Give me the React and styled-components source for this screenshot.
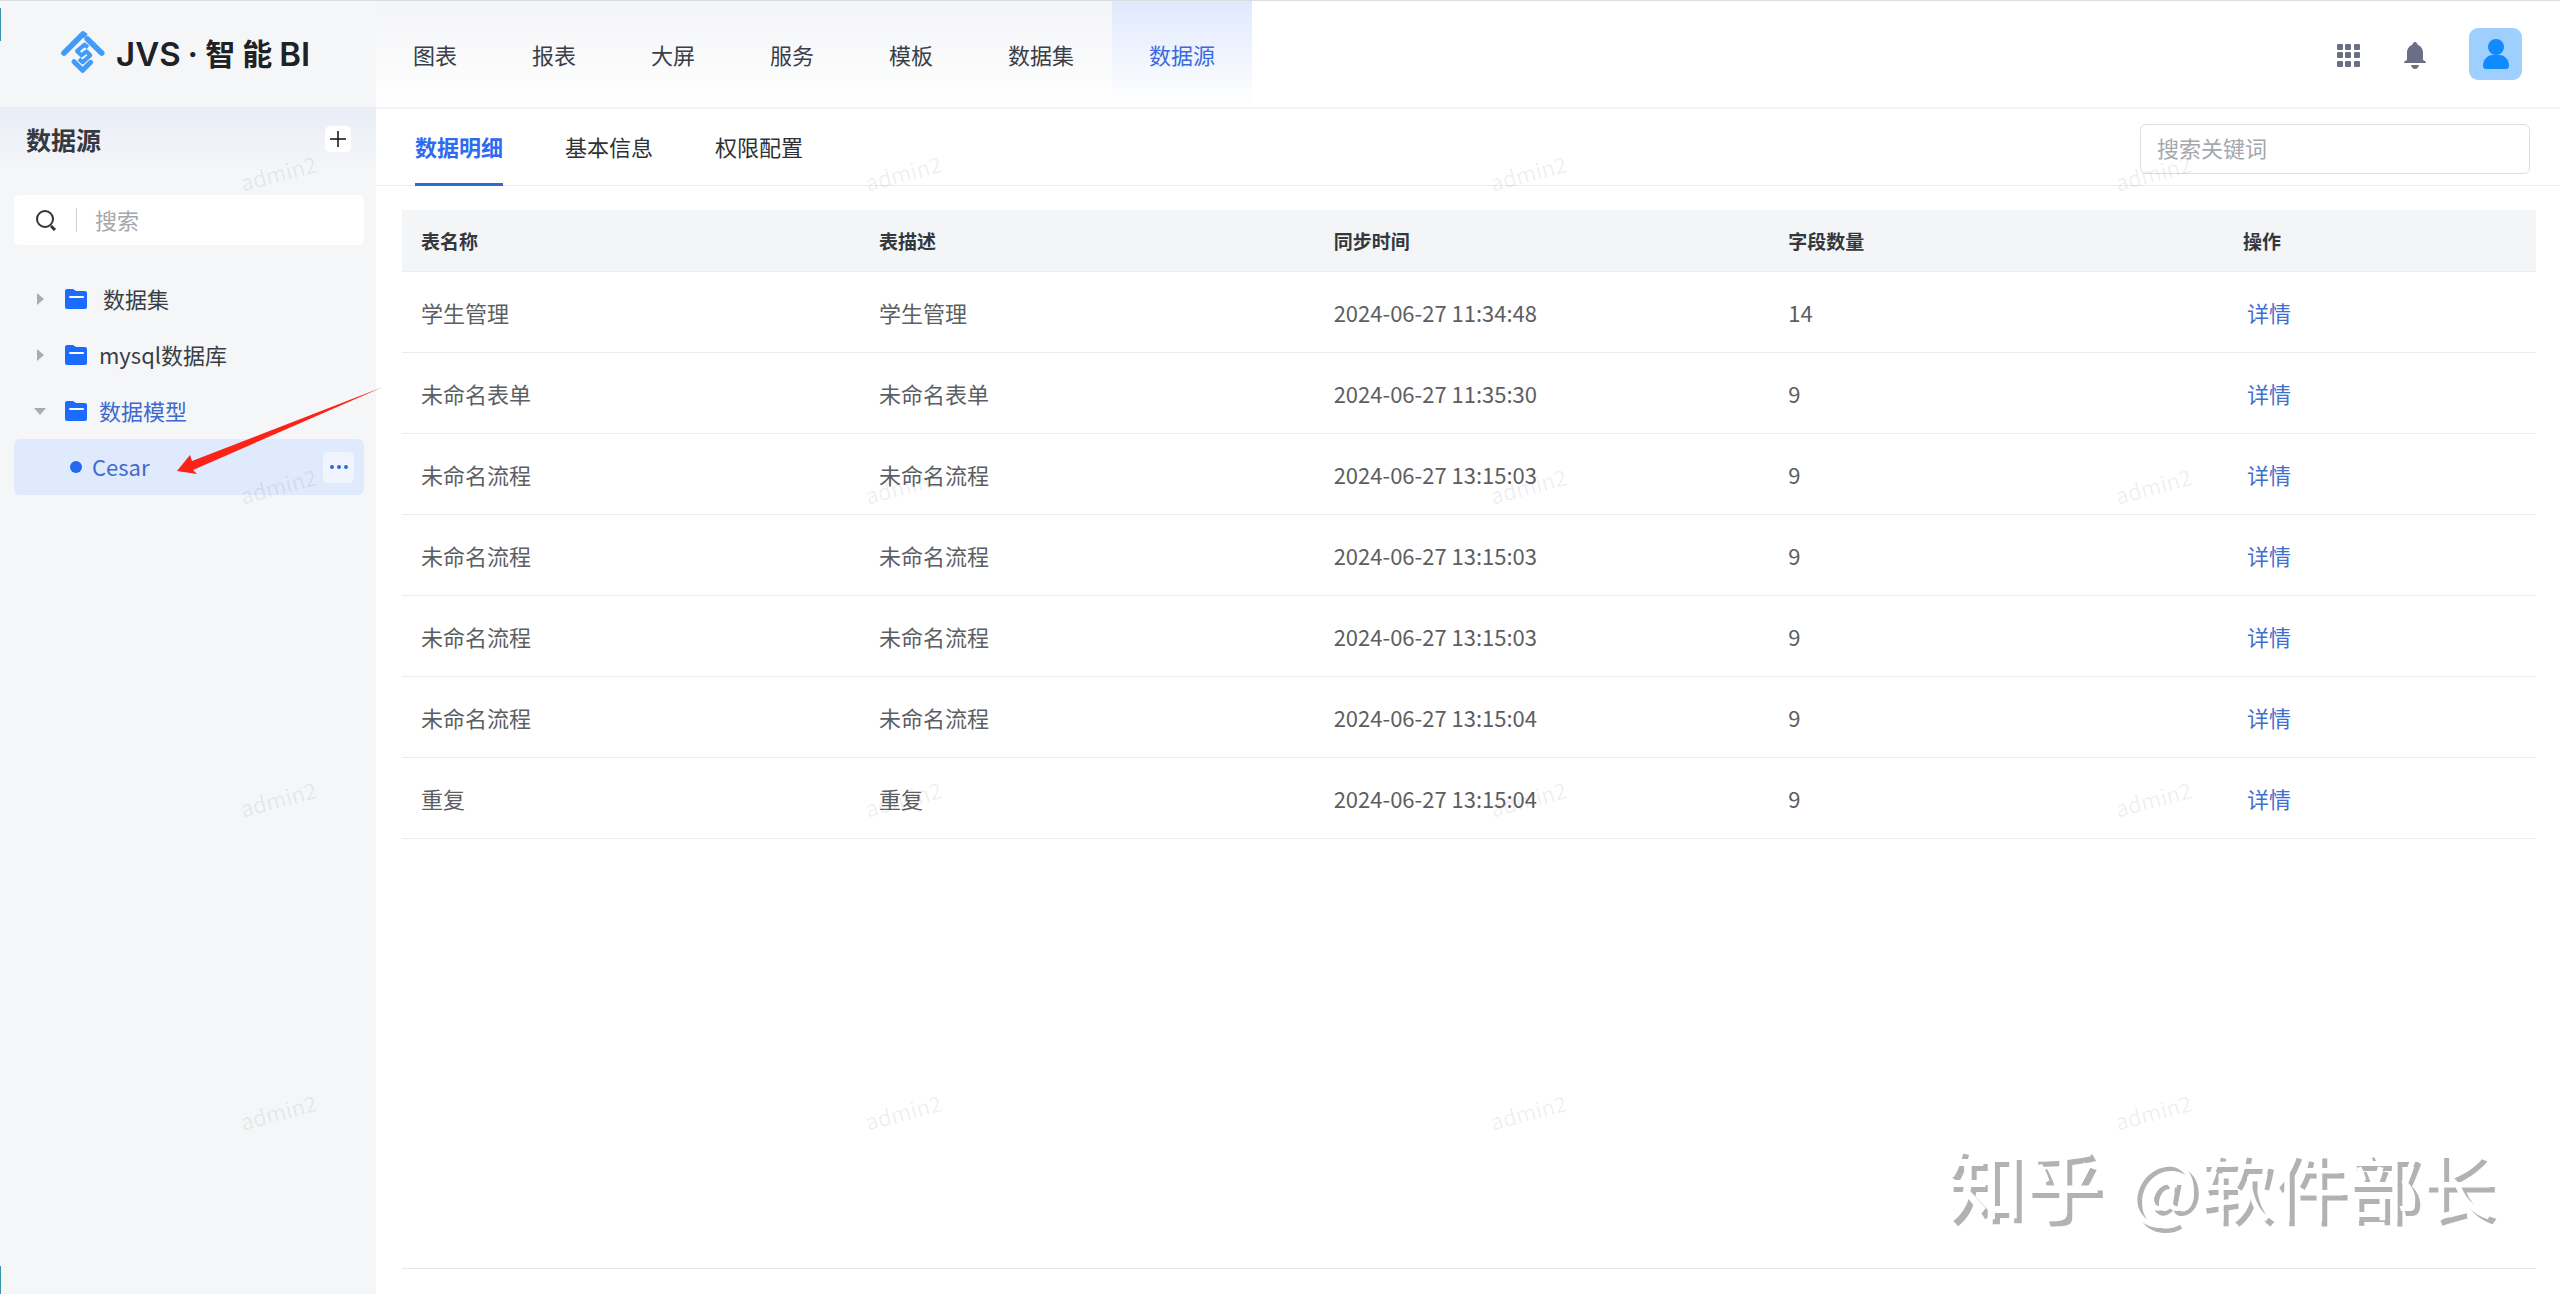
import React, { useState } from 'react'
import styled, { createGlobalStyle } from 'styled-components'

const NAV = ['图表', '报表', '大屏', '服务', '模板', '数据集', '数据源']
const TABS = ['数据明细', '基本信息', '权限配置']
const COLUMNS = ['表名称', '表描述', '同步时间', '字段数量', '操作']
const ROWS = [
    { name: '学生管理', desc: '学生管理', time: '2024-06-27 11:34:48', count: 14 },
    { name: '未命名表单', desc: '未命名表单', time: '2024-06-27 11:35:30', count: 9 },
    { name: '未命名流程', desc: '未命名流程', time: '2024-06-27 13:15:03', count: 9 },
    { name: '未命名流程', desc: '未命名流程', time: '2024-06-27 13:15:03', count: 9 },
    { name: '未命名流程', desc: '未命名流程', time: '2024-06-27 13:15:03', count: 9 },
    { name: '未命名流程', desc: '未命名流程', time: '2024-06-27 13:15:04', count: 9 },
    { name: '重复', desc: '重复', time: '2024-06-27 13:15:04', count: 9 },
]

const LogoIcon = () => (
    <svg width="44" height="44" viewBox="21 22 132 132" fill="none" stroke="#429bf8" strokeLinejoin="round" aria-hidden="true">
        <path d="M30 91L87 34L92 38" strokeWidth="17" strokeLinecap="round" />
        <path d="M81 58L104 36" stroke="#f4f6f8" strokeWidth="4" />
        <path d="M100 49L143 91" strokeWidth="17" strokeLinecap="round" />
        <path d="M102 74L92 66L69 85L82 98L98 86L109 98L86 119L75 109" strokeWidth="12" />
        <path d="M60 117L86 143L110 119" strokeWidth="15" strokeLinecap="round" />
    </svg>
)

const SearchIcon = () => (
    <svg width="22" height="22" viewBox="0 0 22 22" fill="none" stroke="#303338" strokeWidth="2" aria-hidden="true">
        <circle cx="10" cy="10" r="8" />
        <path d="M16 17L20 21" strokeWidth="3" />
    </svg>
)

const FolderIcon = () => (
    <svg width="22" height="22" viewBox="0 0 22 22" aria-hidden="true">
        <path d="M2 1H8L11 3H20Q22 3 22 5V19Q22 21 20 21H2Q0 21 0 19V3Q0 1 2 1Z" fill="#1b6bff" />
        <path d="M5 9H18" stroke="#fff" strokeWidth="2" strokeLinecap="round" />
    </svg>
)

const Caret = ({ open }) => (
    <svg width="12" height="12" viewBox="0 0 12 12" fill="#a9abae" aria-hidden="true">
        <path d={open ? 'M0 3H12L6 10Z' : 'M3 0L10 6L3 12Z'} />
    </svg>
)

const GridIcon = () => (
    <svg width="24" height="24" viewBox="0 0 24 24" fill="#6b6f86" aria-hidden="true">
        {[0, 8, 17].map(y => [0, 8, 17].map(x => (
            <rect key={`${x}-${y}`} x={x} y={y} width="6" height="6" rx="1" />
        )))}
    </svg>
)

const BellIcon = () => (
    <svg width="22" height="27" viewBox="0 0 22 27" fill="#6b6f86" aria-hidden="true">
        <path d="M11 0C13 0 13 2 14 3C17 4 19 7 19 11V18L21 19Q23 21 21 21H1Q-1 21 1 19L3 18V11C3 7 5 4 8 3C9 2 9 0 11 0Z" />
        <path d="M7 23H15Q14 27 11 27T7 23Z" />
    </svg>
)

const UserIcon = () => (
    <svg width="26" height="32" viewBox="0 0 26 32" fill="#0f8bff" aria-hidden="true">
        <circle cx="13" cy="9" r="8" />
        <path d="M0 28C0 21 5 17 9 17H17C21 17 26 21 26 28Q26 31 23 31H3Q0 31 0 28Z" />
    </svg>
)

function TreeItem({ label, open, active, indent }) {
    return (
        <TreeRow>
            <Caret open={open} />
            <FolderIcon />
            <TreeLabel $active={active} $indent={indent}>{label}</TreeLabel>
        </TreeRow>
    )
}

function App() {
    const [nav, setNav] = useState('数据源')
    const [tab, setTab] = useState('数据明细')
    return (
        <Page>
            <GlobalStyle />
            <Sidebar>
                <Brand>
                    <LogoIcon />
                    <BrandName>
                        <span>JVS</span>
                        <span>·</span>
                        <BrandHan>智</BrandHan>
                        <BrandHan>能</BrandHan>
                        <span>BI</span>
                    </BrandName>
                </Brand>
                <SideHead>
                    <SideTitle>数据源</SideTitle>
                    <AddButton aria-label="新增">
                        <svg width="16" height="16" viewBox="0 0 16 16" stroke="#111" strokeWidth="1.5">
                            <path d="M8 0V16M0 8H16" />
                        </svg>
                    </AddButton>
                </SideHead>
                <SideSearch>
                    <SearchIcon />
                    <SideInput type="text" placeholder="搜索" aria-label="搜索" />
                </SideSearch>
                <Tree>
                    <TreeItem label="数据集" indent />
                    <TreeItem label="mysql数据库" />
                    <TreeItem label="数据模型" open active />
                    <LeafRow>
                        <Dot />
                        <TreeLabel $active>Cesar</TreeLabel>
                        <MoreButton aria-label="更多">
                            <svg width="18" height="4" viewBox="0 0 18 4" fill="#2f67d8">
                                <circle cx="2" cy="2" r="2" />
                                <circle cx="9" cy="2" r="2" />
                                <circle cx="16" cy="2" r="2" />
                            </svg>
                        </MoreButton>
                    </LeafRow>
                </Tree>
            </Sidebar>
            <Main>
                <Header>
                    <Nav>
                        {NAV.map(item => (
                            <NavItem key={item} $active={item === nav} onClick={() => setNav(item)}>{item}</NavItem>
                        ))}
                    </Nav>
                    <Tools>
                        <IconButton aria-label="应用"><GridIcon /></IconButton>
                        <IconButton aria-label="通知"><BellIcon /></IconButton>
                        <Avatar aria-label="用户"><UserIcon /></Avatar>
                    </Tools>
                </Header>
                <TabBar>
                    {TABS.map(item => (
                        <Tab key={item} $active={item === tab} onClick={() => setTab(item)}>{item}</Tab>
                    ))}
                    <KeywordInput type="text" placeholder="搜索关键词" aria-label="搜索关键词" />
                </TabBar>
                <Content>
                    <Table>
                        <colgroup>
                            <FirstCol />
                            <col />
                            <col />
                            <col />
                            <LastCol />
                        </colgroup>
                        <thead>
                            <tr>
                                {COLUMNS.map(name => <Th key={name} scope="col">{name}</Th>)}
                            </tr>
                        </thead>
                        <tbody>
                            {ROWS.map((row, i) => (
                                <tr key={i}>
                                    <Td>{row.name}</Td>
                                    <Td>{row.desc}</Td>
                                    <Td>{row.time}</Td>
                                    <Td>{row.count}</Td>
                                    <Td><DetailLink href="#detail">详情</DetailLink></Td>
                                </tr>
                            ))}
                        </tbody>
                    </Table>
                </Content>
            </Main>
            <Arrow width="208" height="90" viewBox="0 0 208 90" aria-hidden="true">
                <path d="M1 85L14 69L16 75L207 1L17 84L21 88Z" fill="#fb2216" />
            </Arrow>
            <Marks aria-hidden="true">
                {Array.from({ length: 16 }, (_, i) => <Mark key={i}><span>admin2</span></Mark>)}
            </Marks>
            <Signature><b>知乎</b> @软件部长</Signature>
            <EdgeTop />
            <EdgeBottom />
        </Page>
    )
}

const GlobalStyle = createGlobalStyle`
* {
    box-sizing: border-box;
}
body {
    margin: 0;
    background: #fff;
}
body, button, input {
    font-family: "Noto Sans CJK SC", "Noto Sans", sans-serif;
    font-size: 22px;
    line-height: 32px;
}
button {
    border: 0;
    padding: 0;
    background: none;
    cursor: pointer;
}
svg {
    display: block;
    flex: none;
}
`

const Page = styled.div`
    position: relative;
    display: flex;
    min-height: 100vh;
    border-top: 1px solid #dcdde0;
    overflow: hidden;
`

const Sidebar = styled.aside`
    flex: none;
    width: 376px;
    background: #f4f6f8;
`

const Brand = styled.div`
    display: flex;
    align-items: center;
    gap: 11px;
    height: 106px;
    padding: 0 0 4px 61px;
    background: #f5f6f8;
`

const BrandName = styled.div`
    display: flex;
    align-items: center;
    gap: 7px;
    padding-top: 3px;
    color: #202124;
    font-family: Inter, "Noto Sans CJK SC", sans-serif;
    font-size: 33px;
    font-weight: 600;
`

const BrandHan = styled.span`
    font-size: 30px;
    font-weight: 700;
`

const SideHead = styled.div`
    display: flex;
    align-items: center;
    justify-content: space-between;
    height: 64px;
    padding: 0 25px 0 26px;
    background: linear-gradient(#e9edf6, #f4f6f8);
`

const SideTitle = styled.h1`
    margin: 0;
    color: #36393f;
    font-size: 25px;
    font-weight: 700;
`

const AddButton = styled.button`
    display: grid;
    place-items: center;
    width: 26px;
    height: 26px;
    border-radius: 5px;
    background: #fff;
`

const SideSearch = styled.div`
    display: flex;
    align-items: center;
    height: 50px;
    margin: 24px 12px 26px 14px;
    padding-left: 21px;
    border-radius: 6px;
    background: #fff;
`

const SideInput = styled.input`
    flex: 1;
    min-width: 0;
    height: 24px;
    margin-left: 19px;
    padding: 0 0 2px 18px;
    border: 0;
    border-left: 1px solid #cfd1d5;
    outline: 0;
    background: none;
    &::placeholder {
        color: #a4a7ae;
    }
`

const Tree = styled.div`
    padding: 0 12px 0 14px;
`

const TreeRow = styled.div`
    display: flex;
    align-items: center;
    height: 56px;
    padding-left: 20px;
    svg + svg {
        margin-left: 19px;
    }
`

const TreeLabel = styled.span`
    margin-left: ${props => (props.$indent ? 16 : 12)}px;
    padding-bottom: 2px;
    color: ${props => (props.$active ? '#4069cf' : '#3a3e47')};
`

const LeafRow = styled.div`
    display: flex;
    align-items: center;
    height: 56px;
    padding: 0 10px 0 56px;
    border-radius: 6px;
    background: #dfeafd;
`

const Dot = styled.i`
    width: 12px;
    height: 12px;
    margin-right: -2px;
    border-radius: 50%;
    background: #2468f2;
`

const MoreButton = styled.button`
    display: grid;
    place-items: center;
    width: 31px;
    height: 31px;
    margin-left: auto;
    border-radius: 5px;
    background: #eff4fe;
`

const Main = styled.main`
    display: flex;
    flex: 1;
    flex-direction: column;
    min-width: 0;
`

const Header = styled.header`
    display: flex;
    justify-content: space-between;
    height: 108px;
    border-bottom: 2px solid #f3f3f5;
`

const Nav = styled.nav`
    display: flex;
    gap: 1px;
    background: linear-gradient(#f3f4f6, #fff);
`

const NavItem = styled.button`
    padding: 0 37px;
    color: ${props => (props.$active ? '#3b6be0' : '#3a3e47')};
    background: ${props => (props.$active ? 'linear-gradient(#e0e9fd, #fff)' : 'none')};
`

const Tools = styled.div`
    display: flex;
    align-items: center;
    padding-right: 38px;
`

const IconButton = styled.button`
    margin-right: 43px;
    padding-top: 3px;
`

const Avatar = styled.button`
    display: grid;
    place-items: center;
    width: 53px;
    height: 52px;
    border-radius: 9px;
    background: #9fcfff;
`

const TabBar = styled.div`
    display: flex;
    align-items: center;
    gap: 62px;
    height: 77px;
    padding: 0 30px 0 39px;
    border-bottom: 1px solid #ebecef;
`

const Tab = styled.button`
    align-self: stretch;
    margin-bottom: -1px;
    border-bottom: 3px solid ${props => (props.$active ? '#2f69d2' : 'transparent')};
    color: ${props => (props.$active ? '#2f6bf0' : '#303133')};
    font-weight: ${props => (props.$active ? 700 : 400)};
`

const KeywordInput = styled.input`
    width: 390px;
    height: 50px;
    margin-top: 4px;
    margin-left: auto;
    padding: 0 16px 4px;
    border: 1px solid #dcdde1;
    border-radius: 6px;
    outline: 0;
    background: #fff;
    &::placeholder {
        color: #a4a7ae;
    }
`

const Content = styled.section`
    flex: 1;
    margin: 24px 24px 25px 26px;
    border-bottom: 1px solid #e6e7ea;
`

const Table = styled.table`
    width: 100%;
    border-collapse: separate;
    border-spacing: 0;
    table-layout: fixed;
`

const FirstCol = styled.col`
    width: 458px;
`

const LastCol = styled.col`
    width: 312px;
`

const Th = styled.th`
    height: 62px;
    padding: 0 19px;
    border-bottom: 1px solid #ebecef;
    background: #f4f5f7;
    color: #33373e;
    font-size: 19px;
    font-weight: 700;
    text-align: left;
`

const Td = styled.td`
    height: 81px;
    padding: 0 19px 1px;
    border-bottom: 1px solid #ebecef;
    color: #5c5e62;
`

const DetailLink = styled.a`
    margin-left: 4px;
    color: #3f6fd0;
    text-decoration: none;
`

const Arrow = styled.svg`
    position: absolute;
    top: 385px;
    left: 176px;
    pointer-events: none;
`

const Marks = styled.div`
    position: absolute;
    inset: 0;
    display: grid;
    grid-template-columns: repeat(4, 625px);
    grid-auto-rows: 313px;
    overflow: hidden;
    pointer-events: none;
`

const Mark = styled.div`
    padding: 155px 0 0 239px;
    color: rgba(0, 0, 0, 0.07);
    span {
        display: inline-block;
        transform: rotate(-15deg);
    }
`

const Signature = styled.div`
    position: absolute;
    right: 66px;
    bottom: 58px;
    color: #fff;
    font-size: 74px;
    line-height: 106px;
    text-shadow: 5px 5px 0 #b2b2b2;
    white-space: pre;
    pointer-events: none;
    b {
        margin-right: 10px;
        font-size: 78px;
        font-weight: 500;
    }
`

const EdgeTop = styled.i`
    position: absolute;
    top: 7px;
    left: 0;
    width: 1px;
    height: 33px;
    background: #3a93ac;
`

const EdgeBottom = styled(EdgeTop)`
    top: auto;
    bottom: 0;
    height: 28px;
`

export default App
